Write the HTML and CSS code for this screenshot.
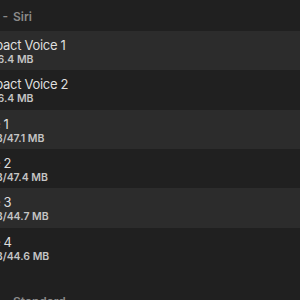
FILE: index.html
```html
<!DOCTYPE html>
<html>
<head>
<meta charset="utf-8">
<link rel="stylesheet" href="styles.css">
</head>
<body>
<div class="panel">
  <div class="section-title">English (US) - Siri</div>
  <div class="list">
    <div class="row alt">
      <div class="title">Compact Voice 1</div>
      <div class="sub">Size: 6.4 MB</div>
    </div>
    <div class="row">
      <div class="title">Compact Voice 2</div>
      <div class="sub">Size: 6.4 MB</div>
    </div>
    <div class="row alt">
      <div class="title">Voice 1</div>
      <div class="sub">2.1 MB/47.1 MB</div>
    </div>
    <div class="row">
      <div class="title">Voice 2</div>
      <div class="sub">2.1 MB/47.4 MB</div>
    </div>
    <div class="row alt">
      <div class="title">Voice 3</div>
      <div class="sub">2.1 MB/44.7 MB</div>
    </div>
    <div class="row">
      <div class="title">Voice 4</div>
      <div class="sub">2.1 MB/44.6 MB</div>
    </div>
  </div>
  <div class="section-title lower">English (US) - Standard</div>
</div>
</body>
</html>
```
FILE: styles.css
```css
html, body {
  margin: 0;
  padding: 0;
  background: #202020;
  overflow: hidden;
}
body {
  width: 300px;
  height: 300px;
  font-family: Inter, "Noto Sans", "Liberation Sans", sans-serif;
  -webkit-font-smoothing: antialiased;
}
.panel {
  display: flex;
  flex-direction: column;
}
.section-title {
  height: 31px;
  box-sizing: border-box;
  padding-top: 9px;
  margin-left: -75px;
  font-size: 12px;
  line-height: 15px;
  font-weight: 600;
  word-spacing: 1.8px;
  color: #8a8a8a;
  white-space: nowrap;
}
.section-title.lower {
  margin-top: 18px;
}
.list {
  display: flex;
  flex-direction: column;
}
.row {
  height: 39.33px;
  box-sizing: border-box;
  padding-top: 6px;
  margin-left: -32.5px;
  padding-right: 32.5px;
  width: 332.5px;
  background: #202020;
  white-space: nowrap;
}
.row.alt {
  background: #2c2c2c;
}
.title {
  font-size: 13px;
  line-height: 16px;
  letter-spacing: -0.3px;
  color: #dedede;
}
.sub {
  padding-left: 2.5px;
  font-size: 10.5px;
  line-height: 13px;
  font-weight: 600;
  color: #c4c4c4;
}
```
